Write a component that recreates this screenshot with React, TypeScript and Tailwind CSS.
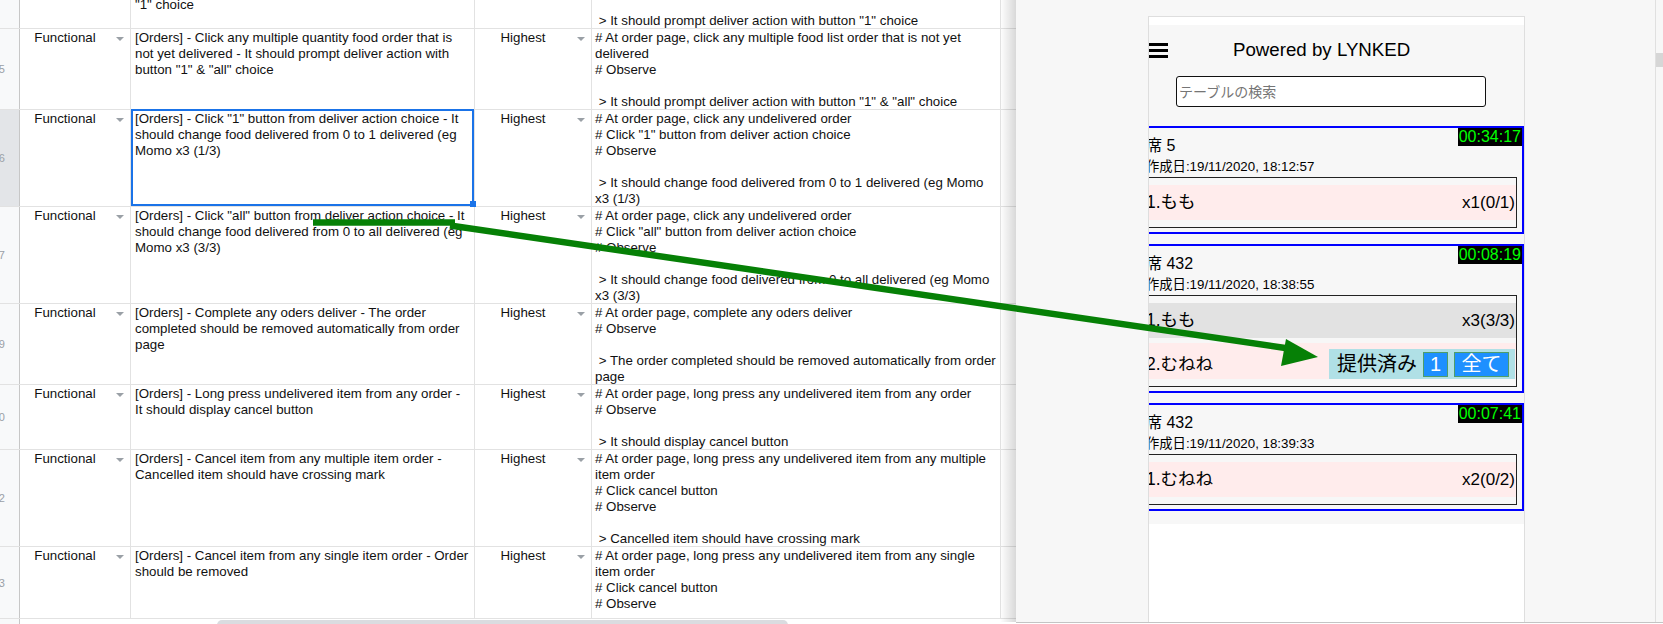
import React from "react";

type Row = { num: string; h: string; b: string[]; d: string[]; sel?: boolean; partial?: boolean };

const ROWS: Row[] = [
  {
    num: "24",
    h: "h-[81px]",
    partial: true,
    b: ["", "", "", "\"1\" choice"],
    d: ["", "", "", "", " > It should prompt deliver action with button \"1\" choice"],
  },
  {
    num: "25",
    h: "h-[81px]",
    b: [
      "[Orders] - Click any multiple quantity food order that is",
      "not yet delivered - It should prompt deliver action with",
      "button \"1\" & \"all\" choice",
    ],
    d: [
      "# At order page, click any multiple food list order that is not yet",
      "delivered",
      "# Observe",
      "",
      " > It should prompt deliver action with button \"1\" & \"all\" choice",
    ],
  },
  {
    num: "26",
    h: "h-[97px]",
    sel: true,
    b: [
      "[Orders] - Click \"1\" button from deliver action choice - It",
      "should change food delivered from 0 to 1 delivered (eg",
      "Momo x3 (1/3)",
    ],
    d: [
      "# At order page, click any undelivered order",
      "# Click \"1\" button from deliver action choice",
      "# Observe",
      "",
      " > It should change food delivered from 0 to 1 delivered (eg Momo",
      "x3 (1/3)",
    ],
  },
  {
    num: "27",
    h: "h-[97px]",
    b: [
      "[Orders] - Click \"all\" button from deliver action choice - It",
      "should change food delivered from 0 to all delivered (eg",
      "Momo x3 (3/3)",
    ],
    d: [
      "# At order page, click any undelivered order",
      "# Click \"all\" button from deliver action choice",
      "# Observe",
      "",
      " > It should change food delivered from 0 to all delivered (eg Momo",
      "x3 (3/3)",
    ],
  },
  {
    num: "29",
    h: "h-[81px]",
    b: [
      "[Orders] - Complete any oders deliver - The order",
      "completed should be removed automatically from order",
      "page",
    ],
    d: [
      "# At order page, complete any oders deliver",
      "# Observe",
      "",
      " > The order completed should be removed automatically from order",
      "page",
    ],
  },
  {
    num: "30",
    h: "h-[65px]",
    b: [
      "[Orders] - Long press undelivered item from any order -",
      "It should display cancel button",
    ],
    d: [
      "# At order page, long press any undelivered item from any order",
      "# Observe",
      "",
      " > It should display cancel button",
    ],
  },
  {
    num: "32",
    h: "h-[97px]",
    b: [
      "[Orders] - Cancel item from any multiple item order -",
      "Cancelled item should have crossing mark",
    ],
    d: [
      "# At order page, long press any undelivered item from any multiple",
      "item order",
      "# Click cancel button",
      "# Observe",
      "",
      " > Cancelled item should have crossing mark",
    ],
  },
  {
    num: "33",
    h: "h-[72px]",
    b: [
      "[Orders] - Cancel item from any single item order - Order",
      "should be removed",
    ],
    d: [
      "# At order page, long press any undelivered item from any single",
      "item order",
      "# Click cancel button",
      "# Observe",
    ],
  },
];

function Tri() {
  return (
    <span className="block h-0 w-0 border-x-[4px] border-t-[4px] border-x-transparent border-t-[#9aa0a6]" />
  );
}

function Lines({ lines }: { lines: string[] }) {
  return (
    <>
      {lines.map((l, i) => (
        <div key={i} className="h-[16px] whitespace-pre">
          {l === "" ? "\u00a0" : l}
        </div>
      ))}
    </>
  );
}

function SheetRow({ r }: { r: Row }) {
  return (
    <div className={`flex shrink-0 border-b border-[#e2e2e2] ${r.h}`}>
      <div
        className={`flex w-[20px] shrink-0 items-center justify-end overflow-hidden border-r border-[#c7c7c7] pr-[14px] text-[11px] text-[#9aa0a6] ${
          r.sel ? "bg-[#e3e5e8]" : "bg-[#f8f9fa]"
        }`}
      >
        {!r.partial && <span className="whitespace-nowrap">{r.num}</span>}
      </div>
      <div className="flex w-[111px] shrink-0 border-r border-[#e2e2e2]">
        <div className="flex-1 whitespace-nowrap pt-[1px] text-center">{r.partial ? "" : "Functional"}</div>
        <div className="flex w-[20px] justify-center pt-[8px]">
          <Tri />
        </div>
      </div>
      <div className="relative w-[344px] shrink-0 border-r border-[#e2e2e2]">
        <div className="h-full overflow-hidden pl-[4px] pt-[1px]">
          <Lines lines={r.b} />
        </div>
        {r.sel && (
          <>
            <div className="absolute bottom-0 left-0 right-0 top-[-1px] border-2 border-[#1a73e8]" />
            <div className="absolute bottom-[-1px] right-[-2px] h-[6px] w-[6px] bg-[#1a73e8]" />
          </>
        )}
      </div>
      <div className="flex w-[117px] shrink-0 border-r border-[#e2e2e2]">
        <div className="flex-1 whitespace-nowrap pt-[1px] text-center">{r.partial ? "" : "Highest"}</div>
        <div className="flex w-[20px] justify-center pt-[8px]">
          <Tri />
        </div>
      </div>
      <div className="w-[409px] shrink-0 overflow-hidden border-r border-[#e2e2e2] pl-[3px] pt-[1px]">
        <Lines lines={r.d} />
      </div>
      <div className="flex-1" />
    </div>
  );
}

function Sheet() {
  return (
    <div className="flex h-[624px] w-[1016px] shrink-0 flex-col overflow-hidden font-['Liberation_Sans',Arial,sans-serif] text-[13.3px] leading-[16px] text-[#111]">
      <div className="mt-[-52px] flex flex-col">
        {ROWS.map((r) => (
          <SheetRow key={r.num} r={r} />
        ))}
      </div>
      <div className="flex h-[6px]">
        <div className="w-[20px] shrink-0 border-r border-[#c7c7c7] bg-[#f8f9fa]" />
        <div className="ml-[197px] mt-[1px] h-[10px] w-[571px] rounded-[5px] bg-[#dadce0]" />
      </div>
    </div>
  );
}

function Card({
  timer,
  seat,
  date,
  children,
}: {
  timer: string;
  seat: string;
  date: string;
  children: React.ReactNode;
}) {
  return (
    <div className="relative border-2 border-[#0000ff] pb-[4px] pl-[1px] pr-[5px] pt-[7px]">
      <div className="absolute right-0 top-0 bg-black px-[1px] text-[16px] leading-[18px] text-[#00ff00]">
        {timer}
      </div>
      <div className="whitespace-nowrap pl-[13px] text-[16px] leading-[22px]">{seat}</div>
      <div className="whitespace-nowrap pl-[13px] text-[13.3px] leading-[20px]">作成日:{date}</div>
      <div className="border border-[#222] py-[7px]">{children}</div>
    </div>
  );
}

function Item({ name, qty, gray }: { name: string; qty: string; gray?: boolean }) {
  return (
    <div
      className={`flex h-[35px] items-center justify-between pl-[12px] pr-[1px] ${
        gray ? "bg-[#e2e2e2]" : "bg-[#ffecec]"
      }`}
    >
      <span className="text-[17.5px]">{name}</span>
      <span className="text-[17px]">{qty}</span>
    </div>
  );
}

function Phone() {
  return (
    <div className="ml-[132px] mt-[16px] h-[640px] w-[377px] overflow-hidden border border-[#dedede] bg-white font-['Liberation_Sans','Noto_Sans_CJK_JP',sans-serif] text-black">
      <div className="h-[8px]" />
      <div className="ml-[-19px] bg-[#f7f7f7] pb-[13px]">
        <div className="flex h-[50px] items-center">
          <div className="ml-[19px] flex h-[15px] w-[19px] flex-col justify-between">
            <div className="h-[3px] bg-black" />
            <div className="h-[3px] bg-black" />
            <div className="h-[3px] bg-black" />
          </div>
          <div className="ml-[65px] whitespace-nowrap text-[18.7px] leading-none">Powered by LYNKED</div>
        </div>
        <input
          readOnly
          placeholder="テーブルの検索"
          className="ml-[46px] mt-[1px] block h-[31px] w-[310px] rounded-[3px] border border-[#111] bg-white pl-[2px] text-[14px] outline-none placeholder:text-[#757575]"
        />
        <div className="mt-[19px] flex flex-col gap-[10px]">
          <Card timer="00:34:17" seat="席 5" date="19/11/2020, 18:12:57">
            <Item name="1.もも" qty="x1(0/1)" />
          </Card>
          <Card timer="00:08:19" seat="席 432" date="19/11/2020, 18:38:55">
            <Item name="1.もも" qty="x3(3/3)" gray />
            <div className="mt-[5px] flex h-[36px] items-center justify-between bg-[#ffecec] pl-[12px] pr-[1px] pt-[6px]">
              <span className="text-[17.5px]">2.むねね</span>
              <div className="flex h-[30px] items-center gap-[6px] bg-[#b0e0e6] pl-[8px] pr-[6px]">
                <span className="whitespace-nowrap text-[20px] leading-none">提供済み</span>
                <span className="flex h-[25px] w-[25px] items-center justify-center border border-[#4f9d69] bg-[#1e90ff] text-[20px] leading-none text-white">
                  1
                </span>
                <span className="flex h-[25px] w-[55px] items-center justify-center border border-[#4f9d69] bg-[#1e90ff] text-[20px] leading-none text-white">
                  全て
                </span>
              </div>
            </div>
          </Card>
          <Card timer="00:07:41" seat="席 432" date="19/11/2020, 18:39:33">
            <Item name="1.むねね" qty="x2(0/2)" />
          </Card>
        </div>
      </div>
    </div>
  );
}

function Panel() {
  return (
    <div className="relative flex h-[623px] w-[647px] shrink-0 border-b border-[#c4c4c4] bg-[#f7f7f7]">
      <div className="absolute bottom-0 left-[-16px] top-0 w-[16px] bg-linear-to-r from-transparent to-black/15" />
      <div className="flex-1 overflow-hidden">
        <Phone />
      </div>
      <div className="w-[8px] shrink-0 border-l border-[#e0e0e0]">
        <div className="mt-[53px] h-[14px] bg-[#d6d6d6]" />
      </div>
    </div>
  );
}

function Arrow() {
  return (
    <svg
      className="pointer-events-none absolute left-0 top-0"
      width="1663"
      height="624"
      viewBox="0 0 1663 624"
    >
      <line x1="313" y1="222.5" x2="455" y2="222.5" stroke="#068006" strokeWidth="6.5" />
      <line x1="450" y1="225.5" x2="1292" y2="349" stroke="#068006" strokeWidth="6.5" />
      <polygon points="1286,339 1281,366 1318,357" fill="#068006" />
    </svg>
  );
}

export default function App() {
  return (
    <div className="relative flex h-[624px] w-[1663px] overflow-hidden bg-white">
      <Sheet />
      <Panel />
      <Arrow />
    </div>
  );
}
